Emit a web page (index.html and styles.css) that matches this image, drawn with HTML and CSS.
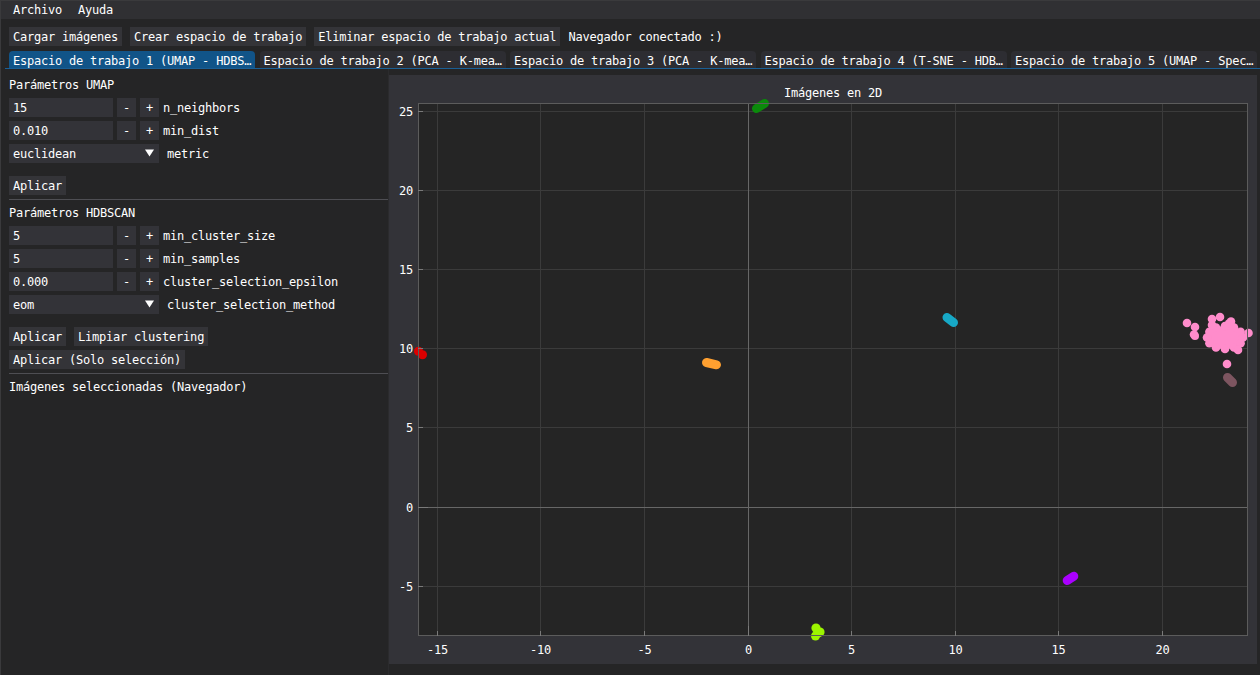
FILE: index.html
```html
<!DOCTYPE html>
<html lang="es">
<head>
<meta charset="utf-8">
<title>Espacios de trabajo</title>
<link rel="stylesheet" href="styles.css">
</head>
<body>
<div class="app">
  <div class="menubar">
    <span class="menu-item">Archivo</span>
    <span class="menu-item">Ayuda</span>
  </div>
  <div class="toolbar">
    <span class="btn">Cargar imágenes</span>
    <span class="btn">Crear espacio de trabajo</span>
    <span class="btn">Eliminar espacio de trabajo actual</span>
    <span class="status">Navegador conectado :)</span>
  </div>
  <div class="tabbar">
    <div class="tab active">Espacio de trabajo 1 (UMAP - HDBS…</div>
    <div class="tab">Espacio de trabajo 2 (PCA - K-mea…</div>
    <div class="tab">Espacio de trabajo 3 (PCA - K-mea…</div>
    <div class="tab">Espacio de trabajo 4 (T-SNE - HDB…</div>
    <div class="tab">Espacio de trabajo 5 (UMAP - Spec…</div>
  </div>
  <div class="main">
    <aside class="panel">
      <div class="title first">Parámetros UMAP</div>
      <div class="fields">
        <div class="row"><span class="input">15</span><span class="step">-</span><span class="step">+</span><span class="label">n_neighbors</span></div>
        <div class="row"><span class="input">0.010</span><span class="step">-</span><span class="step">+</span><span class="label">min_dist</span></div>
        <div class="row"><span class="combo"><span>euclidean</span><span class="arrow"><svg width="9" height="8" viewBox="0 0 9 8"><polygon points="0,0.5 9,0.5 4.5,7.5" fill="#ffffff"/></svg></span></span><span class="label combo-label">metric</span></div>
      </div>
      <div class="actions"><span class="btn">Aplicar</span></div>
      <div class="sep"></div>
      <div class="title">Parámetros HDBSCAN</div>
      <div class="fields">
        <div class="row"><span class="input">5</span><span class="step">-</span><span class="step">+</span><span class="label">min_cluster_size</span></div>
        <div class="row"><span class="input">5</span><span class="step">-</span><span class="step">+</span><span class="label">min_samples</span></div>
        <div class="row"><span class="input">0.000</span><span class="step">-</span><span class="step">+</span><span class="label">cluster_selection_epsilon</span></div>
        <div class="row"><span class="combo"><span>eom</span><span class="arrow"><svg width="9" height="8" viewBox="0 0 9 8"><polygon points="0,0.5 9,0.5 4.5,7.5" fill="#ffffff"/></svg></span></span><span class="label combo-label">cluster_selection_method</span></div>
      </div>
      <div class="actions">
        <div class="action-row"><span class="btn">Aplicar</span><span class="btn">Limpiar clustering</span></div>
        <div class="action-row"><span class="btn">Aplicar (Solo selección)</span></div>
      </div>
      <div class="sep"></div>
      <div class="title">Imágenes seleccionadas (Navegador)</div>
    </aside>
    <section class="plot-frame">
      <div class="plot-title">Imágenes en 2D</div>
      <svg class="plot" width="868" height="565" viewBox="0 0 868 565">
        <rect x="29" y="4" width="830" height="533" fill="#252525"/>
        <g stroke="#3b3b3b" stroke-width="1">
          <line x1="48.5" y1="4" x2="48.5" y2="537"/>
          <line x1="151.5" y1="4" x2="151.5" y2="537"/>
          <line x1="255.5" y1="4" x2="255.5" y2="537"/>
          <line x1="462.5" y1="4" x2="462.5" y2="537"/>
          <line x1="566.5" y1="4" x2="566.5" y2="537"/>
          <line x1="669.5" y1="4" x2="669.5" y2="537"/>
          <line x1="773.5" y1="4" x2="773.5" y2="537"/>
          <line x1="29" y1="12.5" x2="859" y2="12.5"/>
          <line x1="29" y1="91.5" x2="859" y2="91.5"/>
          <line x1="29" y1="170.5" x2="859" y2="170.5"/>
          <line x1="29" y1="249.5" x2="859" y2="249.5"/>
          <line x1="29" y1="328.5" x2="859" y2="328.5"/>
          <line x1="29" y1="487.5" x2="859" y2="487.5"/>
        </g>
        <g stroke="#676767" stroke-width="1">
          <line x1="359.5" y1="4" x2="359.5" y2="537"/>
          <line x1="29" y1="408.5" x2="859" y2="408.5"/>
        </g>
        <g stroke-linecap="round" stroke-width="9" fill="none">
          <line x1="367.5" y1="9.5" x2="375.5" y2="4.5" stroke="#0b8a0b"/>
          <line x1="317.5" y1="263.5" x2="327.5" y2="265.8" stroke="#ffa030"/>
          <line x1="558" y1="218.5" x2="564.5" y2="223.5" stroke="#17a8c6"/>
          <line x1="678.2" y1="481.5" x2="684.8" y2="477.2" stroke="#aa00ff"/>
          <line x1="838.5" y1="278.5" x2="843.5" y2="283.5" stroke="#7d5560"/>
        </g>
        <g fill="#dc0000">
          <circle cx="29.5" cy="252.2" r="4.5"/>
          <circle cx="33.5" cy="255.8" r="4.5"/>
        </g>
        <g fill="#9cf500">
          <circle cx="427" cy="529" r="4.6"/>
          <circle cx="431" cy="533" r="4.6"/>
          <circle cx="426.5" cy="537" r="4.5"/>
          <circle cx="429" cy="534" r="4.5"/>
        </g>
        <g fill="#ff8ccb">
          <ellipse cx="836" cy="238.5" rx="18" ry="11.5"/>
          <circle cx="854" cy="238.5" r="4.3"/>
          <circle cx="851.6" cy="232.8" r="4.3"/>
          <circle cx="845" cy="228.5" r="4.3"/>
          <circle cx="836" cy="227" r="4.3"/>
          <circle cx="827" cy="228.5" r="4.3"/>
          <circle cx="820.4" cy="232.8" r="4.3"/>
          <circle cx="818" cy="238.5" r="4.3"/>
          <circle cx="820.4" cy="244.3" r="4.3"/>
          <circle cx="827" cy="248.5" r="4.3"/>
          <circle cx="836" cy="250" r="4.3"/>
          <circle cx="845" cy="248.5" r="4.3"/>
          <circle cx="851.6" cy="244.3" r="4.3"/>
          <circle cx="823" cy="226" r="4.3"/>
          <circle cx="849" cy="251" r="4.3"/>
          <circle cx="840" cy="224.5" r="4.3"/>
          <circle cx="798" cy="224" r="4.3"/>
          <circle cx="806" cy="228" r="4.3"/>
          <circle cx="805" cy="235.5" r="4.3"/>
          <circle cx="806" cy="237" r="4"/>
          <circle cx="823" cy="220" r="4.3"/>
          <circle cx="831" cy="218" r="4.3"/>
          <circle cx="842" cy="222.5" r="4.3"/>
          <circle cx="859.5" cy="234" r="4.3"/>
          <circle cx="838" cy="265" r="4.3"/>
        </g>
        <rect x="29.5" y="4.5" width="829" height="532" fill="none" stroke="#5c5c5c" stroke-width="1"/>
        <g stroke="#7a7a7a" stroke-width="1">
          <line x1="29" y1="12.5" x2="34" y2="12.5"/>
          <line x1="29" y1="91.5" x2="34" y2="91.5"/>
          <line x1="29" y1="170.5" x2="34" y2="170.5"/>
          <line x1="29" y1="249.5" x2="34" y2="249.5"/>
          <line x1="29" y1="328.5" x2="34" y2="328.5"/>
          <line x1="29" y1="408.5" x2="39" y2="408.5"/>
          <line x1="29" y1="487.5" x2="34" y2="487.5"/>
          <line x1="48.5" y1="537" x2="48.5" y2="532"/>
          <line x1="151.5" y1="537" x2="151.5" y2="532"/>
          <line x1="255.5" y1="537" x2="255.5" y2="532"/>
          <line x1="359.5" y1="537" x2="359.5" y2="527"/>
          <line x1="462.5" y1="537" x2="462.5" y2="532"/>
          <line x1="566.5" y1="537" x2="566.5" y2="532"/>
          <line x1="669.5" y1="537" x2="669.5" y2="532"/>
          <line x1="773.5" y1="537" x2="773.5" y2="532"/>
        </g>
        <g class="tick-label" text-anchor="end">
          <text x="24" y="16.5">25</text>
          <text x="24" y="95.5">20</text>
          <text x="24" y="174.5">15</text>
          <text x="24" y="253.5">10</text>
          <text x="24" y="332.5">5</text>
          <text x="24" y="412.5">0</text>
          <text x="24" y="491.5">-5</text>
        </g>
        <g class="tick-label" text-anchor="middle">
          <text x="48.5" y="554.5">-15</text>
          <text x="151.5" y="554.5">-10</text>
          <text x="255.5" y="554.5">-5</text>
          <text x="359.5" y="554.5">0</text>
          <text x="462.5" y="554.5">5</text>
          <text x="566.5" y="554.5">10</text>
          <text x="669.5" y="554.5">15</text>
          <text x="773.5" y="554.5">20</text>
        </g>
      </svg>
    </section>
  </div>
</div>
</body>
</html>
```
FILE: styles.css
```css
* {
  box-sizing: border-box;
  margin: 0;
  padding: 0;
}

html, body {
  width: 1260px;
  height: 675px;
  overflow: hidden;
}

body {
  background: #252526;
  color: #ffffff;
  font-family: "DejaVu Sans Mono", "Liberation Mono", monospace;
  font-size: 12px;
  line-height: 13px;
  letter-spacing: -0.22px;
}

.app {
  position: relative;
  display: flex;
  flex-direction: column;
  height: 675px;
}

.app::before {
  content: "";
  position: absolute;
  inset: 0;
  border-left: 1px solid #3a3a3c;
  border-top: 1px solid #3a3a3c;
  pointer-events: none;
  z-index: 5;
}

.menubar {
  display: flex;
  height: 19px;
  padding: 4px 0 0 13px;
  background: #303033;
}

.menu-item {
  margin-right: 16px;
  white-space: nowrap;
}

.toolbar {
  display: flex;
  align-items: center;
  gap: 8px;
  margin-top: 8px;
  padding-left: 9px;
}

.btn {
  display: inline-block;
  height: 19px;
  padding: 4px 4px 2px;
  background: #343438;
  white-space: nowrap;
}

.status {
  padding-top: 1px;
  white-space: nowrap;
}

.tabbar {
  display: flex;
  gap: 4.5px;
  margin: 5px 0 0 5px;
  padding-left: 4px;
  border-bottom: 1px solid #1a5f96;
}

.tab {
  width: 246px;
  height: 17px;
  padding: 4px 4px 0;
  background: #2d2d32;
  border-radius: 4px 4px 0 0;
  white-space: nowrap;
  overflow: hidden;
}

.tab.active {
  background: #115488;
}

.main {
  display: flex;
  flex: 1;
}

.panel {
  display: flex;
  flex-direction: column;
  align-items: flex-start;
  width: 389px;
  padding-left: 9px;
  border-right: 1px solid #2b2b2d;
}

.title {
  margin-top: 7px;
  white-space: nowrap;
}

.title.first {
  margin-top: 10px;
}

.fields {
  display: flex;
  flex-direction: column;
  gap: 4px;
  margin-top: 6px;
}

.row {
  display: flex;
  align-items: center;
  gap: 4px;
  height: 19px;
}

.input {
  width: 104px;
  height: 19px;
  padding: 4px 4px 2px;
  background: #333338;
}

.step {
  width: 19px;
  height: 19px;
  padding-top: 4px;
  text-align: center;
  background: #333338;
}

.label {
  padding-top: 1px;
  white-space: nowrap;
}

.combo {
  display: flex;
  justify-content: space-between;
  width: 150px;
  height: 19px;
  padding: 4px 0 0 4px;
  background: #333338;
}

.arrow {
  display: flex;
  justify-content: center;
  width: 19px;
  padding-top: 1px;
}

.combo-label {
  margin-left: 4px;
}

.actions {
  display: flex;
  flex-direction: column;
  align-items: flex-start;
  gap: 4px;
  margin-top: 13px;
}

.action-row {
  display: flex;
  gap: 8px;
}

.sep {
  align-self: stretch;
  height: 1px;
  margin-top: 4px;
  background: #4e4e53;
}

.plot-frame {
  display: flex;
  flex-direction: column;
  width: 868px;
  height: 589px;
  margin-top: 6px;
  padding-top: 11px;
  background: #333338;
}

.plot-title {
  height: 13px;
  padding: 1px 9px 0 29px;
  text-align: center;
  white-space: nowrap;
  overflow: visible;
}

.plot {
  display: block;
  overflow: visible;
}

.tick-label {
  fill: #ffffff;
  font-family: "DejaVu Sans Mono", "Liberation Mono", monospace;
  font-size: 12px;
  letter-spacing: -0.22px;
}
```
